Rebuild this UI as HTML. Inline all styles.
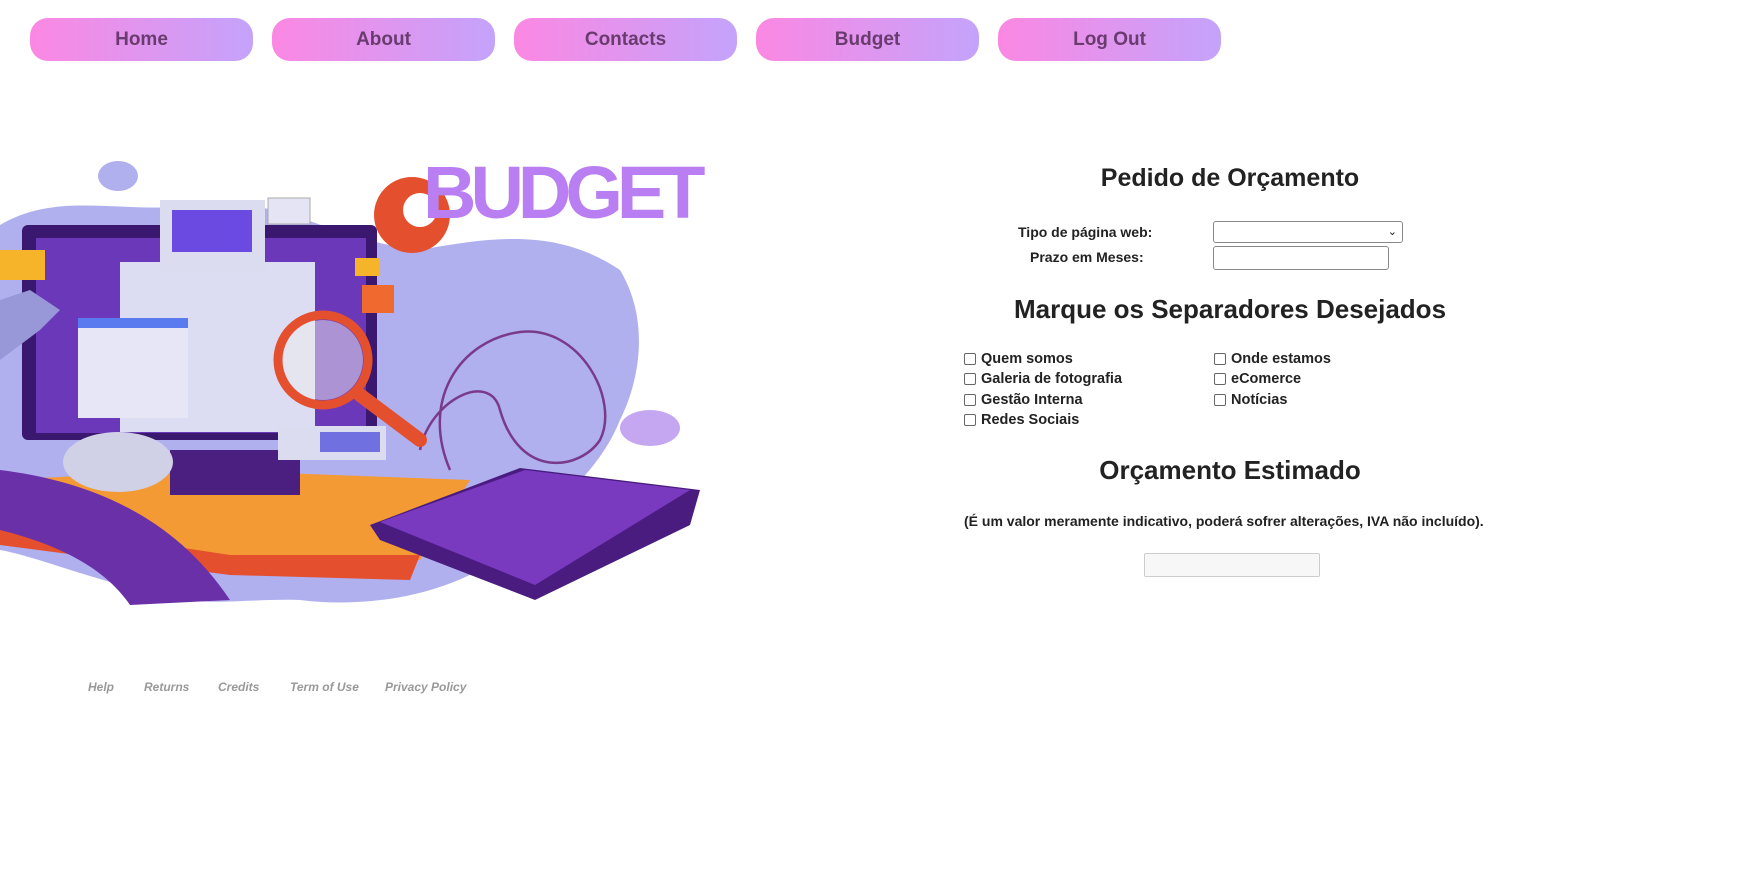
<!DOCTYPE html>
<html><head><meta charset="utf-8">
<style>
*{margin:0;padding:0;box-sizing:border-box}
body{width:1744px;height:880px;background:#fff;position:relative;overflow:hidden;font-family:"Liberation Sans","DejaVu Sans",sans-serif;color:#1a1a1a}
.nav a{position:absolute;top:18px;width:223px;height:43px;border-radius:18px;background:linear-gradient(90deg,#fb88e3,#c4a3fb);color:#6a3b6e;font-weight:bold;font-size:19px;text-align:center;line-height:43px;text-decoration:none}
.abs{position:absolute}
h2{position:absolute;left:952px;width:556px;text-align:center;font-weight:bold;color:#222}
.lab{position:absolute;font-size:14px;font-weight:bold;color:#222}
.cb{position:absolute;font-size:14.5px;font-weight:bold;color:#222;display:flex;align-items:center}
.cb i{display:inline-block;width:12px;height:12px;border:1px solid #666;border-radius:2px;margin-right:5px;background:#fff}
.ft{position:absolute;top:680px;font-size:12px;font-style:italic;font-weight:bold;color:#999}
</style></head><body>
<div class="nav">
<a style="left:30px">Home</a><a style="left:272px">About</a><a style="left:514px">Contacts</a><a style="left:756px">Budget</a><a style="left:998px">Log Out</a>
</div>

<svg class="abs" style="left:0;top:140px" width="720" height="480" viewBox="0 140 720 480">
<path d="M0 225 C60 190 120 215 200 205 C280 195 330 240 420 250 C500 235 560 230 620 270 C650 320 640 380 620 420 C600 470 560 500 520 540 C470 590 380 610 300 600 C240 598 200 610 140 590 C80 575 30 555 0 550 Z" fill="#b0b0ef"/>
<ellipse cx="118" cy="176" rx="20" ry="15" fill="#b0b0ef"/>
<ellipse cx="650" cy="428" rx="30" ry="18" fill="#c4a7f0"/>
<path d="M450 470 C420 400 460 340 520 332 C580 325 620 400 600 440 C580 470 520 480 500 410 C490 370 430 400 420 450" fill="none" stroke="#7a3a8a" stroke-width="2.5"/>
<path d="M0 480 L200 470 L470 480 L420 560 L230 560 L0 530 Z" fill="#f39a35"/>
<path d="M0 520 L230 555 L420 555 L410 580 L230 575 L0 545 Z" fill="#e4502e"/>
<path d="M0 470 C80 480 170 510 230 600 L130 605 C100 560 40 540 0 530 Z" fill="#6a30a8"/>
<rect x="170" y="450" width="130" height="45" fill="#4a1f80"/>
<rect x="22" y="225" width="355" height="215" rx="6" fill="#3a1870"/>
<rect x="36" y="238" width="330" height="195" fill="#6a38b8"/>
<rect x="120" y="262" width="195" height="170" fill="#dcdcf2"/>
<rect x="78" y="318" width="110" height="100" fill="#e6e6f6"/>
<rect x="78" y="318" width="110" height="10" fill="#5a7af0"/>
<rect x="160" y="200" width="105" height="72" fill="#dcdcf0"/>
<rect x="172" y="210" width="80" height="42" fill="#6a4ae0"/>
<rect x="268" y="198" width="42" height="26" fill="#e4e4f4" stroke="#aaa"/>
<rect x="0" y="250" width="45" height="30" fill="#f5b42a"/>
<rect x="355" y="258" width="25" height="18" fill="#f5b42a"/>
<rect x="362" y="285" width="32" height="28" fill="#f06a30"/>
<circle cx="412" cy="215" r="38" fill="#e4502e"/>
<circle cx="420" cy="210" r="17" fill="#fff"/>
<circle cx="323" cy="360" r="45" fill="none" stroke="#e4502e" stroke-width="9"/>
<circle cx="323" cy="360" r="40" fill="#eee" opacity=".5"/>
<path d="M360 395 L420 440" stroke="#e4502e" stroke-width="14" stroke-linecap="round"/>
<rect x="278" y="426" width="108" height="34" fill="#dcdcf0"/>
<rect x="320" y="432" width="60" height="20" fill="#7070e0"/>
<ellipse cx="118" cy="462" rx="55" ry="30" fill="#d0d0e6"/>
<path d="M370 525 L520 468 L700 490 L690 525 L535 600 L380 540 Z" fill="#4a1c80"/>
<path d="M380 522 L525 470 L690 490 L535 585 Z" fill="#7a3ac0"/>
<path d="M0 300 L30 290 L60 310 L40 330 L0 360 Z" fill="#9898d8"/>
</svg>
<div class="abs" style="left:423px;top:156px;font-size:74px;font-weight:900;color:#b97ff2;letter-spacing:-6px;line-height:74px">BUDGET</div>

<h2 style="top:164px;font-size:25px">Pedido de Orçamento</h2>
<div class="lab" style="left:1018px;top:224px">Tipo de página web:</div>
<div class="lab" style="left:1030px;top:249px">Prazo em Meses:</div>
<div class="abs" style="left:1213px;top:221px;width:190px;height:22px;border:1px solid #888;border-radius:3px;font-size:11px;text-align:right;padding-right:5px;line-height:20px">⌄</div>
<div class="abs" style="left:1213px;top:246px;width:176px;height:24px;border:1px solid #888;border-radius:3px"></div>
<h2 style="top:294px;font-size:26px">Marque os Separadores Desejados</h2>
<div class="cb" style="left:964px;top:351px"><i></i>Quem somos</div>
<div class="cb" style="left:964px;top:371px"><i></i>Galeria de fotografia</div>
<div class="cb" style="left:964px;top:392px"><i></i>Gestão Interna</div>
<div class="cb" style="left:964px;top:412px"><i></i>Redes Sociais</div>
<div class="cb" style="left:1214px;top:351px"><i></i>Onde estamos</div>
<div class="cb" style="left:1214px;top:371px"><i></i>eComerce</div>
<div class="cb" style="left:1214px;top:392px"><i></i>Notícias</div>
<h2 style="top:455px;font-size:26px">Orçamento Estimado</h2>
<div class="lab" style="left:964px;top:513px;font-size:14px">(É um valor meramente indicativo, poderá sofrer alterações, IVA não incluído).</div>
<div class="abs" style="left:1144px;top:553px;width:176px;height:24px;border:1px solid #ccc;border-radius:2px;background:#f7f7f7"></div>

<div class="ft" style="left:88px">Help</div>
<div class="ft" style="left:144px">Returns</div>
<div class="ft" style="left:218px">Credits</div>
<div class="ft" style="left:290px">Term of Use</div>
<div class="ft" style="left:385px">Privacy Policy</div>
</body></html>
